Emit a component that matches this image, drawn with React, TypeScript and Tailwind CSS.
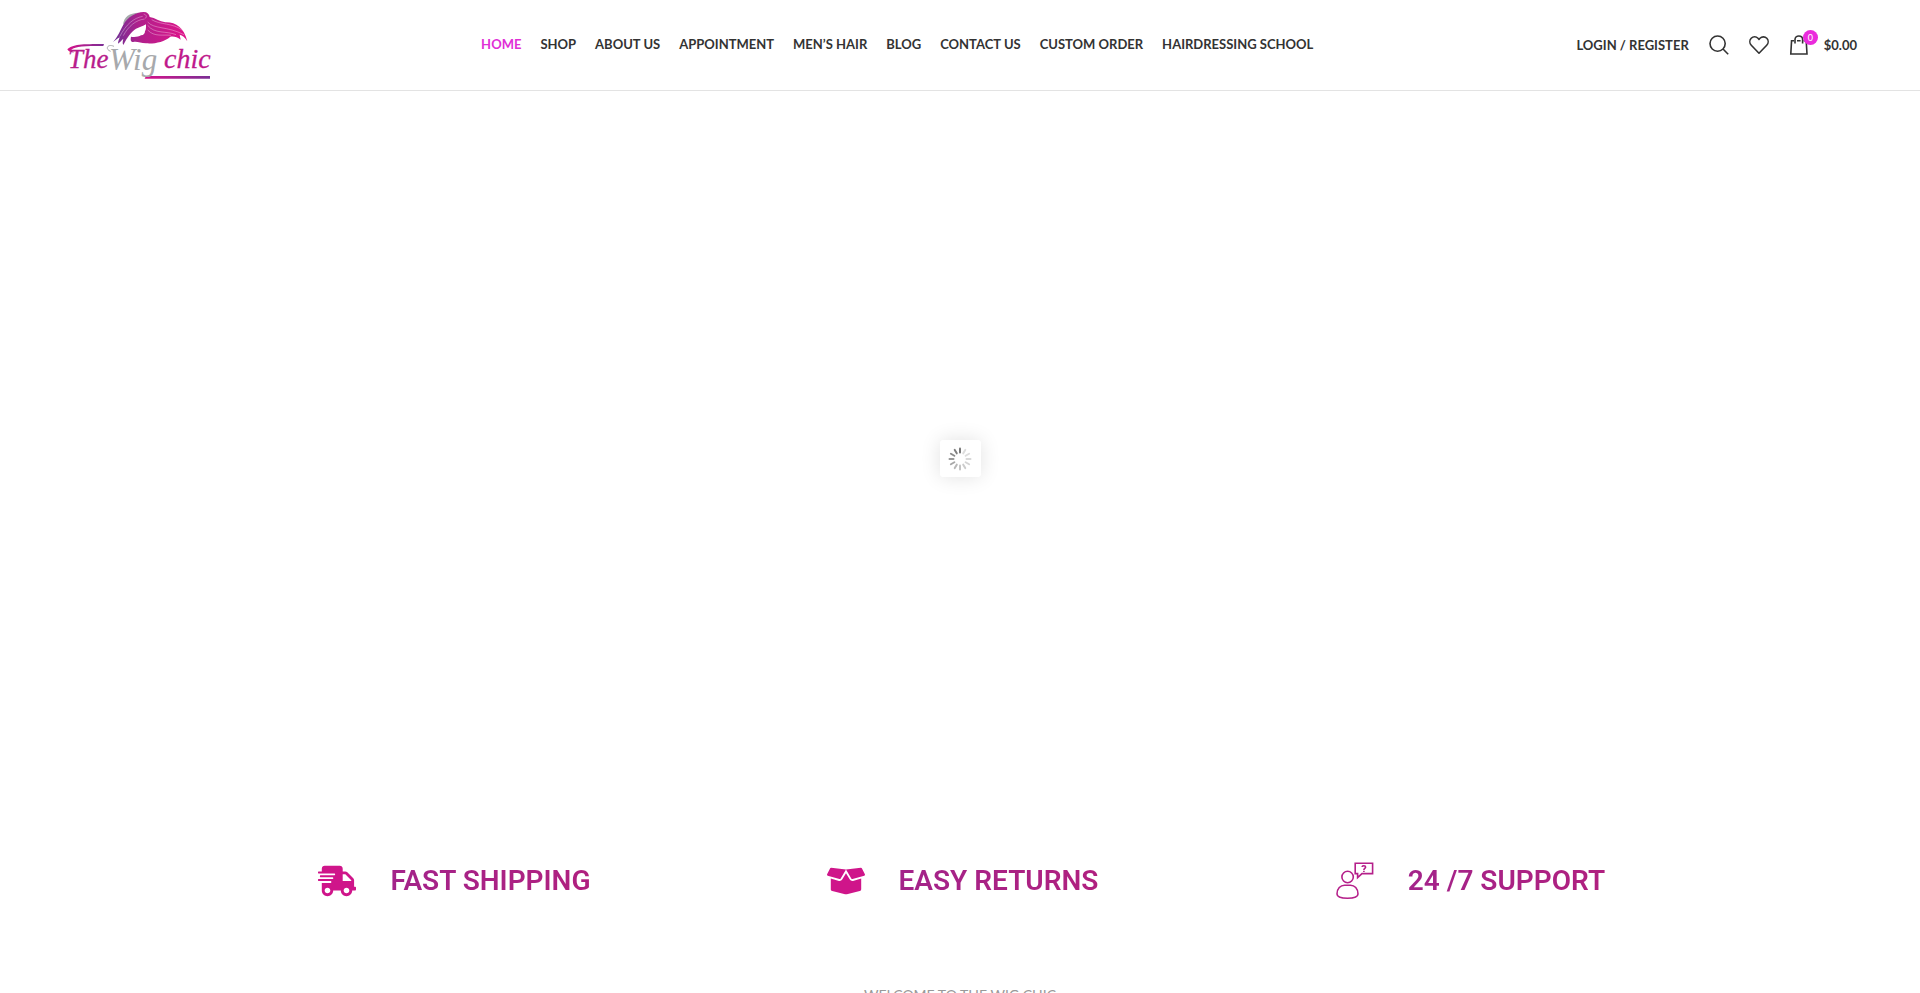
import React from 'react';
import { FaShippingFast, FaBoxOpen } from 'react-icons/fa';

interface NavItem {
  label: string;
  active?: boolean;
}

interface Feature {
  title: string;
  icon: React.ReactNode;
}

const NAV_ITEMS: NavItem[] = [
  { label: 'Home', active: true },
  { label: 'Shop' },
  { label: 'About us' },
  { label: 'Appointment' },
  { label: 'Men’s Hair' },
  { label: 'Blog' },
  { label: 'Contact us' },
  { label: 'Custom Order' },
  { label: 'Hairdressing School' },
];

const Logo: React.FC = () => (
  <svg width="180" height="90" viewBox="0 0 180 90" role="img" aria-label="The Wig chic">
    <defs>
      <linearGradient id="brand" x1="0" y1="0" x2="1" y2="0">
        <stop offset="0" stopColor="#d6128a" />
        <stop offset="1" stopColor="#7b2f95" />
      </linearGradient>
      <linearGradient id="hair" x1="0" y1="0" x2="1" y2="0">
        <stop offset="0" stopColor="#6d3296" />
        <stop offset="0.35" stopColor="#b0208c" />
        <stop offset="1" stopColor="#e0148a" />
      </linearGradient>
    </defs>
    <g transform="scale(0.3333)">
      {/* Grey strands behind the crown */}
      <path d="M219 74C222 50 238 39 266 38C246 46 232 58 219 74Z" fill="#a7a9ac" />
      {/* Hair */}
      <path
        d="M189 126C204 110 210 92 220 74C232 52 256 37 281 36C292 36 298 42 299 51C316 54 328 64 346 67C377 66 402 82 412 124C405 112 397 106 389 104L392 119C382 111 371 108 361 110C342 126 314 132 288 130C272 129 262 124 250 126C242 126 241 120 243 110C255 112 266 110 273 106C281 106 285 101 285 94C289 88 288 80 288 73C276 80 267 82 258 86C244 94 231 113 220 135C217 130 218 124 220 116C213 122 209 128 204 131C204 125 207 119 209 112C202 116 196 122 189 126Z"
        fill="url(#hair)"
      />
      <g fill="none" stroke="#fff" strokeWidth="1">
        <path d="M293 66C312 88 352 78 402 104" />
        <path d="M293 76C314 103 350 92 378 104" />
        <path d="M305 59C331 75 367 68 398 91" />
        <path d="M293 90C313 112 340 103 363 106" />
        <path d="M278 49C251 54 228 73 209 110" />
        <path d="M284 57C257 60 235 79 220 107" />
        <path d="M281 42C291 45 291 51 285 56" />
      </g>
      <path d="M52 148C66 133 96 132 162 132L160 138C104 138 76 139 64 149C63 154 69 156 73 157C63 158 55 155 52 148Z" fill="url(#brand)" />
      <path d="M288 228H480V236H284Z" fill="url(#brand)" />
      <path d="M182 154C164 148 172 130 192 139" fill="none" stroke="#a7a9ac" strokeWidth="3" />
    </g>
    <g className="font-['Liberation_Serif',serif] font-normal italic">
      <text x="18" y="68" fontSize="27" fill="#b81d8c" stroke="#b81d8c" strokeWidth="0.3">The</text>
      <text x="59" y="70" fontSize="31" fill="#a7a9ac">Wig</text>
      <text x="114" y="68" fontSize="28" fill="#c0188b" stroke="#c0188b" strokeWidth="0.3">chic</text>
    </g>
  </svg>
);

const SearchIcon: React.FC = () => (
  <svg width="20" height="20" viewBox="0 0 20 20" fill="none" stroke="#333" strokeWidth="1.6">
    <circle cx="8.6" cy="8.6" r="7.6" />
    <path d="M14 14L19.2 19.2" />
  </svg>
);

const HeartIcon: React.FC = () => (
  <svg width="20" height="20" viewBox="0 0 20 20" fill="none" stroke="#333" strokeWidth="1.6" strokeLinejoin="round">
    <path d="M10 18.2L2.3 10.3C0.4 8.3 0.4 5.2 2.2 3.3C4.1 1.4 7.1 1.4 9 3.3L10 4.4L11 3.3C12.9 1.4 15.9 1.4 17.8 3.3C19.6 5.2 19.6 8.3 17.7 10.3Z" />
  </svg>
);

const BagIcon: React.FC = () => (
  <svg width="20" height="20" viewBox="0 0 20 20" fill="none" stroke="#333" strokeWidth="1.6">
    <path d="M2.6 5.8H5M8 5.8H11.6M14.6 5.8H17.2L18 19H1.8L2.6 5" />
    <path d="M6 8.5V4.6C6 -0.2 13.6 -0.2 13.6 4.6V8.5" />
  </svg>
);

const SupportIcon: React.FC = () => (
  <svg width="38" height="38" viewBox="0 0 38 38" fill="none" stroke="#b5208a" strokeWidth="1.6">
    <circle cx="11.6" cy="15" r="5.7" />
    <path d="M1 32C1 26.5 4.5 23.2 8.5 23.2H14.5C18.5 23.2 22 26.5 22 32C22 35.2 17 36.2 11.5 36.2C6 36.2 1 35.2 1 32Z" />
    <path d="M19.2 1.2H36.6V11.6H26L21.6 15.6V11.6H19.2Z" />
    <path d="M26.2 4.9C26.2 3.3 29.6 3.2 29.6 5.1C29.6 6.4 27.9 6.3 27.9 8M27.9 8.8V10" />
  </svg>
);

const FEATURES: Feature[] = [
  { title: 'FAST SHIPPING', icon: <FaShippingFast size={38} /> },
  { title: 'EASY RETURNS', icon: <FaBoxOpen size={38} /> },
  { title: '24 /7 SUPPORT', icon: <SupportIcon /> },
];

const Header: React.FC = () => (
  <header className="flex h-[91px] items-center border-b border-[#e3e3e3] px-[50px] text-[13px] leading-5 font-bold text-[#333]">
    <a href="#" className="shrink-0">
      <Logo />
    </a>
    <nav className="flex flex-1 justify-center pr-3 pb-0.5">
      <ul className="flex gap-[19px] whitespace-nowrap uppercase">
        {NAV_ITEMS.map(item => (
          <li key={item.label}>
            <a href="#" className={item.active ? 'text-[#e02fd6]' : 'hover:text-[#e02fd6]'}>
              {item.label}
            </a>
          </li>
        ))}
      </ul>
    </nav>
    <div className="flex shrink-0 items-center gap-5 pr-[13px]">
      <a href="#" className="uppercase">Login / Register</a>
      <button type="button" aria-label="Search">
        <SearchIcon />
      </button>
      <a href="#" aria-label="Wishlist">
        <HeartIcon />
      </a>
      <a href="#" aria-label="Shopping cart" className="flex items-center gap-[15px]">
        <span className="relative">
          <BagIcon />
          <span className="absolute -top-[5px] -right-[9px] flex size-[15px] items-center justify-center rounded-full bg-[#ea2bdc] text-[9px] font-normal text-white">
            0
          </span>
        </span>
        $0.00
      </a>
    </div>
  </header>
);

const SPOKES = ['#777', '#ddd', '#ddd', '#d8d8d8', '#d4d4d4', '#ccc', '#c4c4c4', '#b8b8b8', '#a8a8a8', '#999', '#8c8c8c', '#808080'];

const Spinner: React.FC = () => (
  <div role="status" aria-label="Loading" className="flex h-[37px] w-[41px] items-center justify-center rounded-[3px] bg-white shadow-[0_0_20px_rgba(0,0,0,0.12)]">
    <svg width="24" height="24" viewBox="-12 -12 24 24">
      {SPOKES.map((color, i) => (
        <path key={i} d="M0 -6.5V-10.5" stroke={color} strokeWidth="2" strokeLinecap="round" transform={`rotate(${i * 30})`} />
      ))}
    </svg>
  </div>
);

export default function App() {
  return (
    <div className="h-screen overflow-hidden bg-white font-['Lato',sans-serif]">
      <Header />
      <main>
        {/* Slider area */}
        <section className="flex h-[735px] items-center justify-center">
          <Spinner />
        </section>

        <section className="mx-auto grid w-full max-w-[1524px] grid-cols-3 pt-[34px] pb-[30px]">
          {FEATURES.map(feature => (
            <div key={feature.title} className="flex items-center justify-center gap-[34px] pl-[5px]">
              <span className="text-[#cf158a]">{feature.icon}</span>
              <h4 className="bg-linear-to-r from-[#a3238a] to-[#b0207f] bg-clip-text font-['Roboto',sans-serif] text-[28px] leading-[42px] font-semibold text-transparent">
                {feature.title}
              </h4>
            </div>
          ))}
        </section>

        <p className="pt-[53px] text-center text-[14px] leading-5 text-[#999] uppercase">Welcome to The Wig Chic</p>
      </main>
    </div>
  );
}
